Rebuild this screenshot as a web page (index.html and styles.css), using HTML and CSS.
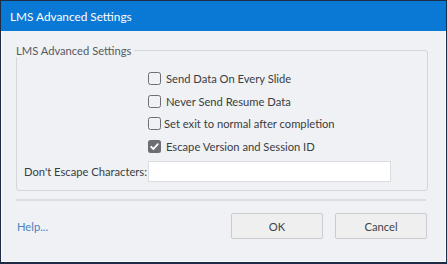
FILE: index.html
```html
<!DOCTYPE html>
<html>
<head>
<meta charset="utf-8">
<link rel="stylesheet" href="styles.css">
</head>
<body>
<div class="dialog">
  <div class="titlebar">LMS Advanced Settings</div>
  <div class="body">
    <fieldset class="group">
      <legend class="legend">LMS Advanced Settings</legend>
      <div class="checks">
        <label class="check"><span class="box"></span><span class="lbl">Send Data On Every Slide</span></label>
        <label class="check"><span class="box"></span><span class="lbl">Never Send Resume Data</span></label>
        <label class="check"><span class="box"></span><span class="lbl tight">Set exit to normal after completion</span></label>
        <label class="check"><span class="box checked"><svg viewBox="0 0 13 13" width="13" height="13"><path d="M3.2 6.8 L5.4 9 L9.8 4.2" fill="none" stroke="#fff" stroke-width="1.8" stroke-linecap="round" stroke-linejoin="round"/></svg></span><span class="lbl">Escape Version and Session ID</span></label>
      </div>
      <div class="field">
        <span class="field-label">Don't Escape Characters:</span>
        <span class="input"></span>
      </div>
    </fieldset>
    <div class="sep"></div>
    <div class="footer">
      <span class="help">Help...</span>
      <div class="buttons">
        <span class="btn">OK</span>
        <span class="btn">Cancel</span>
      </div>
    </div>
  </div>
</div>
</body>
</html>
```
FILE: styles.css
```css
html, body { margin: 0; padding: 0; }
body { width: 447px; height: 264px; overflow: hidden; font-family: "Lato", "Open Sans", sans-serif; }
.dialog {
  width: 447px; height: 264px; box-sizing: border-box;
  border: 1px solid #1d2b45; border-width: 1px 1px 2px 1px;
  background: #eff1f4; display: flex; flex-direction: column;
}
.titlebar {
  height: 30px; flex: none; background: #0a78d5; color: #fff;
  font-size: 11.8px; display: flex; align-items: center; padding-left: 9px;
}
.body {
  flex: 1; border: 1px solid #f9fafc; border-top: none; padding: 0 17px 0 14px;
  display: flex; flex-direction: column;
}
.group {
  margin: 13px 0 0 0; padding: 0; border: 1px solid #d3d6da; border-radius: 3px;
  height: 147px; box-sizing: border-box; min-width: 0;
}
.legend { padding: 0 3px 0 0; margin-left: -1px; font-size: 11.2px; color: #555a60; }
.checks { display: flex; flex-direction: column; padding: 10px 0 0 131px; }
.check { display: flex; align-items: center; height: 22.7px; font-size: 11.2px; color: #3a3d42; white-space: nowrap; }
.box {
  width: 13px; height: 13px; box-sizing: border-box; border: 1.5px solid #6b6e73; border-radius: 2.5px;
  flex: none; margin-right: 5px; display: flex;
}
.box.checked { background: #6b6e73; border: none; }
.lbl.tight { margin-left: -2px; }
.field { display: flex; align-items: center; margin-top: 3px; }
.field-label {
  width: 131px; flex: none; text-align: right; font-size: 11.2px; color: #3a3d42;
  white-space: nowrap; box-sizing: border-box; padding-right: 1px;
}
.input { width: 243px; height: 21px; flex: none; box-sizing: border-box; background: #fff; border: 1px solid #d9dce0; }
.sep { height: 2px; background: #dadde1; margin-top: 8px; margin-right: 2px; }
.footer { display: flex; justify-content: space-between; align-items: center; margin-top: 12px; }
.help { font-size: 11.2px; color: #4a83bd; padding-left: 1px; }
.buttons { display: flex; gap: 12px; margin-right: 1px; }
.btn {
  width: 92px; height: 26px; box-sizing: border-box; border: 1px solid #c9cbce; border-radius: 2px;
  background: #efefef; font-size: 11.2px; color: #404348; display: flex; align-items: center; justify-content: center;
}
```
